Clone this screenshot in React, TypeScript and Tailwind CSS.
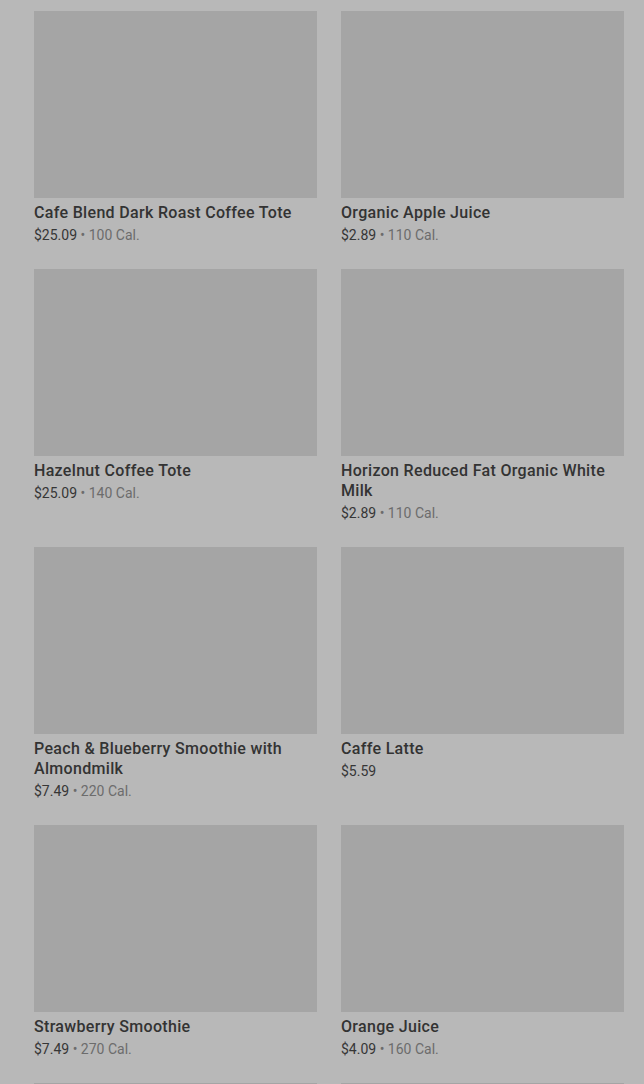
import React from 'react';

const items = [
  { name: 'Cafe Blend Dark Roast Coffee Tote', price: '$25.09', cal: '100 Cal.' },
  { name: 'Organic Apple Juice', price: '$2.89', cal: '110 Cal.' },
  { name: 'Hazelnut Coffee Tote', price: '$25.09', cal: '140 Cal.' },
  { name: 'Horizon Reduced Fat Organic White Milk', price: '$2.89', cal: '110 Cal.' },
  { name: 'Peach & Blueberry Smoothie with Almondmilk', price: '$7.49', cal: '220 Cal.' },
  { name: 'Caffe Latte', price: '$5.59', cal: null },
  { name: 'Strawberry Smoothie', price: '$7.49', cal: '270 Cal.' },
  { name: 'Orange Juice', price: '$4.09', cal: '160 Cal.' },
  { name: '', price: '', cal: null },
  { name: '', price: '', cal: null },
];

const ItemCard = ({ item }) => (
  <div>
    <div className="h-[187px] bg-[#a5a5a5]" />
    {item.name && (
      <>
        <div className="mt-[5px] text-[16px] leading-5 font-medium tracking-[0.02em] text-[#333333]">{item.name}</div>
        <div className="mt-[2px] text-[14px] leading-5 text-[#363636]">
          {item.price}
          {item.cal && <span className="text-[#6c6c6c]"> • {item.cal}</span>}
        </div>
      </>
    )}
  </div>
);

const App = () => {
  return (
    <div className="h-[1084px] overflow-hidden bg-[#b8b8b8]" style={{ fontFamily: 'Roboto, "Noto Sans", sans-serif' }}>
      <div className="grid grid-cols-2 gap-x-6 gap-y-6 pt-[11px] pl-[34px] pr-[20px]">
        {items.map((item, i) => (
          <ItemCard key={i} item={item} />
        ))}
      </div>
    </div>
  );
};

export default App;
